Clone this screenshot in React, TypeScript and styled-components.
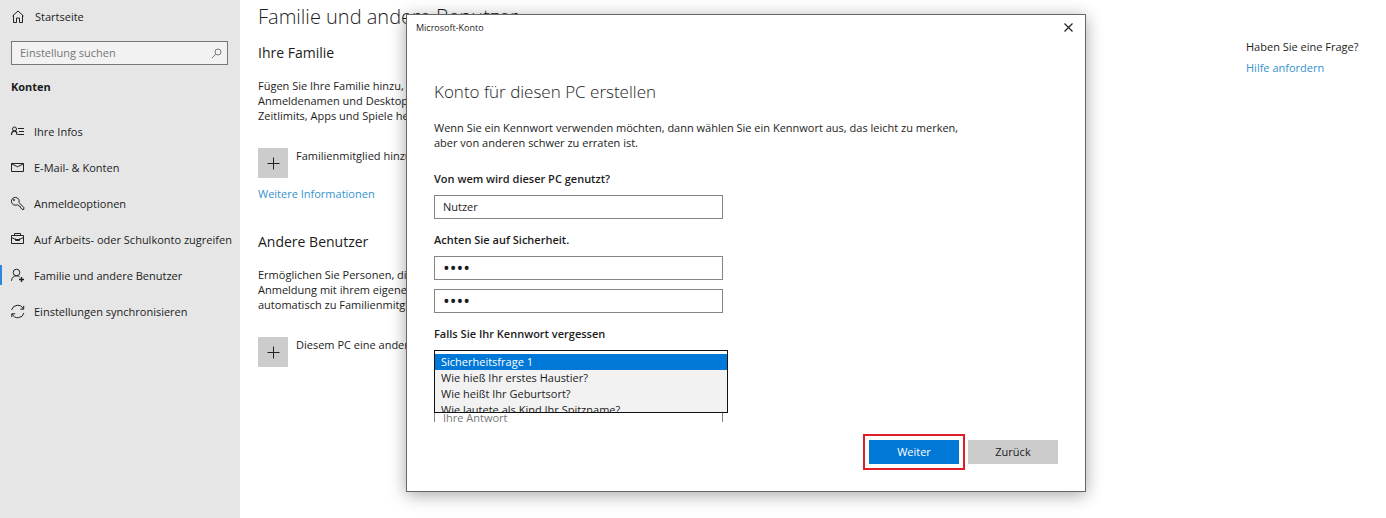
import React from "react";
import styled, { createGlobalStyle } from "styled-components";

const Global = createGlobalStyle`
  * { box-sizing: border-box; }
  body { margin: 0; background: #fff; color: #1c1c1c; font: 11px/15px "Open Sans", "Noto Sans", sans-serif; }
  h1, h2, p, ul { margin: 0; padding: 0; font-weight: 400; }
  button, input, select { font: inherit; color: inherit; border-radius: 0; margin: 0; }
`;

const Page = styled.div`
  position: relative;
  display: flex;
  min-height: 100vh;
  overflow: hidden;
`;

const Sidebar = styled.aside`
  flex: 0 0 240px;
  background: #e6e6e6;
`;

const NavLink = styled.a<{ $active?: boolean }>`
  display: flex;
  align-items: center;
  gap: 9px;
  height: 36px;
  padding-left: 8px;
  border-left: 2px solid ${(p) => (p.$active ? "#2f86e0" : "transparent")};
  border-image: ${(p) => (p.$active ? "linear-gradient(transparent 25%, #2f86e0 25% 75%, transparent 75%) 1" : "none")};
  color: inherit;
  text-decoration: none;
  white-space: nowrap;
`;

const HomeLink = styled(NavLink)`
  gap: 10px;
  height: 33px;
`;

const NavList = styled.ul`
  margin-top: 16px;
  list-style: none;
`;

const Icon = styled.svg`
  flex: none;
  width: 15px;
  height: 15px;
  fill: none;
  stroke: #222;
  stroke-width: 1;
`;

const Search = styled.label`
  display: flex;
  align-items: center;
  height: 24px;
  margin: 8px 12px 0 11px;
  padding: 0 5px 0 8px;
  border: 1px solid #777;
  background: #f2f2f2;
`;

const SearchInput = styled.input`
  flex: 1;
  min-width: 0;
  padding: 0 0 2px;
  border: 0;
  outline: 0;
  background: none;
  &::placeholder { color: #767676; opacity: 1; }
`;

const SearchIcon = styled(Icon)`
  width: 11px;
  height: 11px;
  stroke: #777;
`;

const NavTitle = styled.h2`
  margin: 12px 0 0 11px;
  font-size: 11px;
  font-weight: 700;
  line-height: 20px;
`;

const Main = styled.main`
  flex: 1;
  padding: 2px 0 0 18px;
  white-space: nowrap;
`;

const PageTitle = styled.h1`
  font-size: 20px;
  font-weight: 300;
  line-height: 30px;
`;

const Section = styled.section`
  padding-top: 11px;
  & + & { padding-top: 31px; }
`;

const SectionTitle = styled.h2`
  margin-bottom: 15px;
  font-size: 14px;
  line-height: 20px;
`;

const AddButton = styled.button`
  display: flex;
  gap: 8px;
  margin: 25px 0 8px;
  padding: 0;
  border: 0;
  background: none;
  line-height: 16px;
`;

const PlusTile = styled.span`
  display: grid;
  place-items: center;
  width: 30px;
  height: 30px;
  background: #cccccc;
`;

const Link = styled.a`
  color: #3492cd;
  text-decoration: none;
`;

const Help = styled.aside`
  display: flex;
  flex-direction: column;
  gap: 6px;
  width: 140px;
  padding-top: 39px;
`;

const Dialog = styled.div`
  position: absolute;
  top: 14px;
  left: 406px;
  display: flex;
  flex-direction: column;
  width: 680px;
  height: 478px;
  border: 1px solid #666;
  background: #fff;
  box-shadow: 0 3px 16px rgba(0, 0, 0, 0.35);
`;

const TitleBar = styled.header`
  display: flex;
  align-items: center;
  justify-content: space-between;
  height: 24px;
  padding: 0 9px;
  font-size: 9px;
`;

const CloseButton = styled.button`
  display: flex;
  padding: 0;
  border: 0;
  background: none;
`;

const Form = styled.form`
  flex: 1;
  display: flex;
  flex-direction: column;
  min-height: 0;
`;

const Fields = styled.div`
  flex: 1;
  min-height: 0;
  padding: 41px 27px 0;
  overflow: hidden;
`;

const DialogTitle = styled.h1`
  margin-bottom: 16px;
  font-size: 17px;
  font-weight: 300;
  line-height: 24px;
`;

const Label = styled.label`
  display: block;
  margin-bottom: 8px;
  font-weight: 600;
  line-height: 16px;
`;

const Intro = styled.p`
  margin-bottom: 21px;
`;

const TextInput = styled.input`
  display: block;
  width: 289px;
  height: 24px;
  padding: 0 8px 2px;
  border: 1px solid #858585;
  background: #fff;
  outline: 0;
  &::placeholder { color: #777; opacity: 1; }
  &[type="password"] { padding-bottom: 0; font-size: 18px; }
`;

const Group = styled.div`
  display: flex;
  flex-direction: column;
  gap: 9px;
  margin-bottom: 13px;
`;

const QuestionSlot = styled.div`
  position: relative;
  height: 56px;
`;

const QuestionList = styled.select`
  position: absolute;
  top: 0;
  left: 0;
  width: 294px;
  height: 63px;
  padding: 3px 0 0;
  overflow: hidden;
  border: 1px solid #111;
  background: linear-gradient(#fff 4px, #f2f2f2 4px);
  outline: 0;
`;

const Question = styled.option`
  min-height: 16px;
  padding: 0 6px;
  line-height: 16px;
  &:checked {
    background: #0078d7 linear-gradient(#0078d7, #0078d7);
    color: #fff;
    -webkit-text-fill-color: #fff;
  }
`;

const Footer = styled.footer`
  display: flex;
  justify-content: flex-end;
  gap: 9px;
  padding: 18px 27px 27px;
`;

const Button = styled.button<{ $primary?: boolean }>`
  width: 90px;
  height: 24px;
  padding: 0 0 2px;
  border: 0;
  background: ${(p) => (p.$primary ? "#0078d7" : "#cccccc")};
  color: ${(p) => (p.$primary ? "#fff" : "#1c1c1c")};
  outline: ${(p) => (p.$primary ? "2px solid #dc1f26" : "none")};
  outline-offset: 4px;
`;

const navItems = [
  {
    label: "Ihre Infos",
    icon: <><circle cx="4.500" cy="5" r="2" /><path d="M1.500 11C1.500 8.500 2.500 7.200 4.500 7.200S7 8.500 7 11M8 4.500h6M9 7.500h5M8 10.500h6" strokeWidth="1.200" /></>,
  },
  {
    label: "E-Mail- & Konten",
    icon: <path d="M1.500 3.500h12v8h-12zM1.500 3.800l6 3 6-3" />,
  },
  {
    label: "Anmeldeoptionen",
    icon: <><path d="M9 6.600A3.900 3.900 0 1 0 6.600 9l1.200-.2L9 10.200l1.200.2.600 1.600 1.200 1.300 1.800.2v-2L9 6.600" /><circle cx="4" cy="4" r=".6" /></>,
  },
  {
    label: "Auf Arbeits- oder Schulkonto zugreifen",
    icon: <path d="M1.500 3.500h12v8h-12zM4.500 3.500v-2h6v2M1.500 5.500l4 2h4l4-2M5.500 6.500v2h4v-2" />,
  },
  {
    label: "Familie und andere Benutzer",
    active: true,
    icon: <><circle cx="6.500" cy="4.500" r="3.300" /><path d="M1.500 12.800C1.800 9.500 3.800 7.800 6.500 7.800c1.300 0 2.300.4 3.100 1.100" /><path d="M11.500 9v5M9 11.500h5" strokeWidth="1.400" /></>,
  },
  {
    label: "Einstellungen synchronisieren",
    icon: <path d="M1.600 6A6.200 6.200 0 0 1 13.300 5M13.700 1.800v3.400h-3.400M13.900 9A6.200 6.200 0 0 1 2.200 10M1.800 13.200v-3.400h3.400" />,
  },
];

const questions = [
  "Sicherheitsfrage 1",
  "Wie hieß Ihr erstes Haustier?",
  "Wie heißt Ihr Geburtsort?",
  "Wie lautete als Kind Ihr Spitzname?",
];

function AddPerson({ label }: { label: string }) {
  return (
    <AddButton type="button">
      <PlusTile>
        <Icon viewBox="0 0 15 15"><path d="M7.500 1.500v12M1.500 7.500h12" /></Icon>
      </PlusTile>
      {label}
    </AddButton>
  );
}

export default function App() {
  return (
    <Page>
      <Global />
      <Sidebar>
        <HomeLink href="#">
          <Icon viewBox="0 0 15 15"><path d="M2.500 7L8 2l5.500 5M3.500 6.200v7.300h3v-4.500h3v4.500h3v-7.300" /></Icon>
          Startseite
        </HomeLink>
        <Search>
          <SearchInput type="text" aria-label="Einstellung suchen" placeholder="Einstellung suchen" />
          <SearchIcon viewBox="0 0 11 11"><circle cx="7" cy="4" r="3" /><path d="M4.800 6.200L.8 10.200" /></SearchIcon>
        </Search>
        <NavTitle>Konten</NavTitle>
        <nav>
          <NavList>
            {navItems.map((item) => (
              <li key={item.label}>
                <NavLink href="#" $active={item.active}>
                  <Icon viewBox="0 0 15 15">{item.icon}</Icon>
                  {item.label}
                </NavLink>
              </li>
            ))}
          </NavList>
        </nav>
      </Sidebar>

      <Main>
        <PageTitle>Familie und andere Benutzer</PageTitle>
        <Section>
          <SectionTitle>Ihre Familie</SectionTitle>
          <p>
            Fügen Sie Ihre Familie hinzu, damit jeder seinen eigenen
            <br />
            Anmeldenamen und Desktop erhält.
            <br />
            Zeitlimits, Apps und Spiele helfen
          </p>
          <AddPerson label="Familienmitglied hinzufügen" />
          <Link href="#">Weitere Informationen</Link>
        </Section>
        <Section>
          <SectionTitle>Andere Benutzer</SectionTitle>
          <p>
            Ermöglichen Sie Personen, die nicht zur Familie gehören, die
            <br />
            Anmeldung mit ihrem eigenen Konto. Sie werden nicht
            <br />
            automatisch zu Familienmitgliedern.
          </p>
          <AddPerson label="Diesem PC eine andere Person hinzufügen" />
        </Section>
      </Main>

      <Help>
        <p>Haben Sie eine Frage?</p>
        <Link href="#">Hilfe anfordern</Link>
      </Help>

      <Dialog role="dialog" aria-label="Microsoft-Konto">
        <TitleBar>
          Microsoft-Konto
          <CloseButton type="button" aria-label="Schließen">
            <Icon viewBox="0 0 15 15"><path d="M3.500 3.500l8 8M11.500 3.500l-8 8" strokeWidth="1.200" /></Icon>
          </CloseButton>
        </TitleBar>
        <Form>
          <Fields>
            <DialogTitle>Konto für diesen PC erstellen</DialogTitle>
            <Intro>
              Wenn Sie ein Kennwort verwenden möchten, dann wählen Sie ein Kennwort aus, das leicht zu merken,
              <br />
              aber von anderen schwer zu erraten ist.
            </Intro>
            <Label htmlFor="user">Von wem wird dieser PC genutzt?</Label>
            <Group>
              <TextInput id="user" type="text" defaultValue="Nutzer" />
            </Group>
            <Label htmlFor="password">Achten Sie auf Sicherheit.</Label>
            <Group>
              <TextInput id="password" type="password" defaultValue="1234" />
              <TextInput type="password" aria-label="Kennwort wiederholen" defaultValue="1234" />
            </Group>
            <Label htmlFor="question">Falls Sie Ihr Kennwort vergessen</Label>
            <QuestionSlot>
              <QuestionList id="question" size={4} defaultValue={questions[0]}>
                {questions.map((q) => (
                  <Question key={q} value={q}>{q}</Question>
                ))}
              </QuestionList>
            </QuestionSlot>
            <TextInput type="text" aria-label="Ihre Antwort" placeholder="Ihre Antwort" />
          </Fields>
          <Footer>
            <Button type="button" $primary>Weiter</Button>
            <Button type="button">Zurück</Button>
          </Footer>
        </Form>
      </Dialog>
    </Page>
  );
}
